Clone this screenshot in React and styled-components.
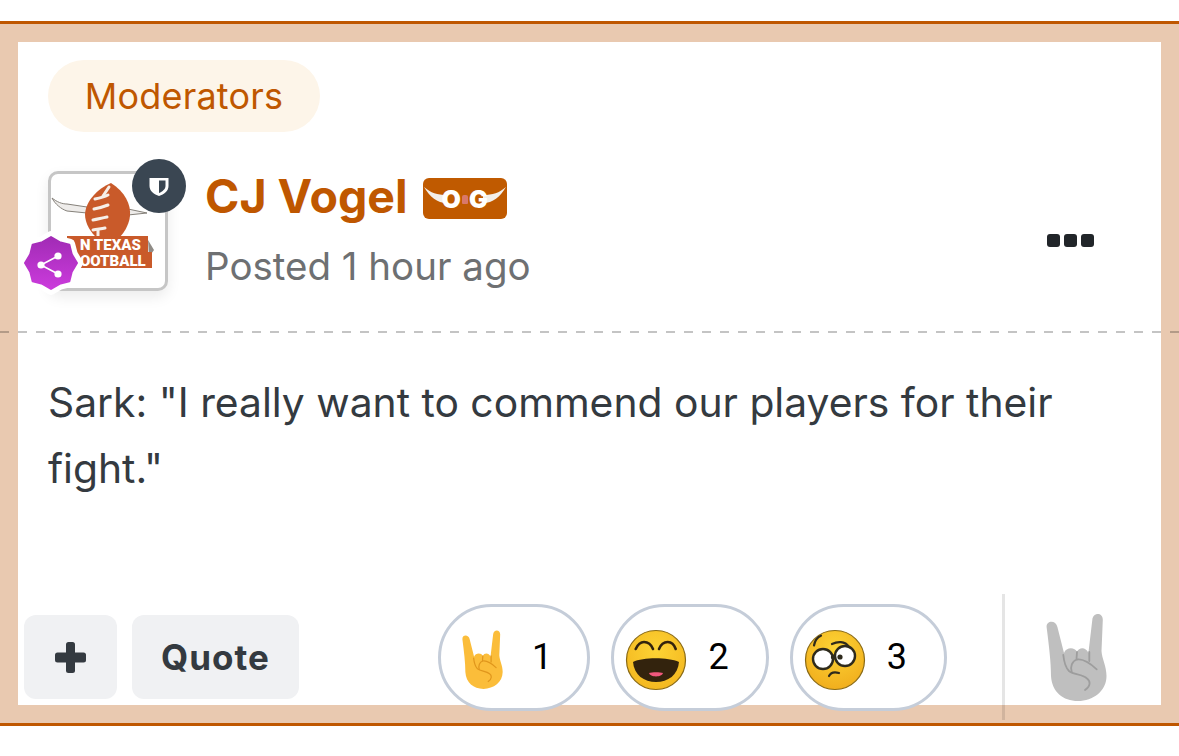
import React from 'react';
import styled, {createGlobalStyle} from 'styled-components';

const burnt = '#bf5700';

//Star badge outline
const starPoints = (outer, inner, cx, cy) => {
    let pts = [];
    for (let i = 0; i < 16; i++) {
        const r = i % 2 === 0 ? outer : inner;
        const a = (Math.PI * i) / 8 - Math.PI / 2;
        pts.push(`${(cx + r * Math.cos(a)).toFixed(2)},${(cy + r * Math.sin(a)).toFixed(2)}`);
    }
    return pts.join(' ');
};

const HandIcon = ({width, height, fill, line}) => (
    <svg width={width} height={height} viewBox="0 0 61 88">
        <path
            fill={fill}
            d="M.6 13C.2 6 10 5.800 11.400 13L18 39C20 33 29 33 31 38C33 33 40 33 42.400 39L46.300 6C46.800 -2 57 -2 56.800 6L55.500 37C56 45 60.500 52 60.500 62C60.500 77 47 87 32 87C17 87 6 78 5 62C5 48 3 32 .6 13Z"
        />
        <g fill="none" stroke={line} strokeWidth="1.800" strokeLinecap="round" strokeLinejoin="round">
            <path d="M17.300 41C18 48 20 54 23 57C28 61 36 60 41 64.500C44.500 67 45 72 39 76" />
            <path d="M25.700 58C24 53 26 47 31 45.500C37 44.500 45 50 50.700 55.300" />
            <path d="M43.300 38V47" />
            <path d="M31 38L30.500 45" />
        </g>
    </svg>
);

const LaughEmoji = () => (
    <svg width="62" height="62" viewBox="0 0 62 62">
        <defs>
            <radialGradient id="laughFace" cx="50%" cy="35%" r="70%">
                <stop offset="0%" stopColor="#fdd334" />
                <stop offset="100%" stopColor="#f3b61f" />
            </radialGradient>
        </defs>
        <circle cx="31" cy="31" r="29.500" fill="url(#laughFace)" stroke="#8a6a14" strokeWidth="1.200" />
        <g fill="none" stroke="#33230d" strokeWidth="2.600" strokeLinecap="round">
            <path d="M10.700 20C13 15 16 13 19 13C22 13 26 15 28 20" />
            <path d="M34 20C36 15 40 13 42.700 13C46 13 49 15 50.700 20" />
        </g>
        <path d="M8 33C18 28 43 28 54 33C53 46 43 53 31 53C19 53 9 46 8 33Z" fill="#33230d" />
        <path d="M24 44C27 43 35 43 38 44C37 48.500 25 48.500 24 44Z" fill="#f0587c" />
    </svg>
);

const ConfusedEmoji = () => (
    <svg width="62" height="62" viewBox="0 0 62 62">
        <defs>
            <radialGradient id="confusedFace" cx="50%" cy="30%" r="75%">
                <stop offset="0%" stopColor="#fdd334" />
                <stop offset="100%" stopColor="#f0ac1c" />
            </radialGradient>
        </defs>
        <circle cx="31" cy="31" r="29.500" fill="url(#confusedFace)" stroke="#8a6a14" strokeWidth="1.200" />
        <circle cx="19" cy="30" r="10" fill="#fff" stroke="#2e2a1c" strokeWidth="2.400" />
        <circle cx="41" cy="27" r="10" fill="#fff" stroke="#2e2a1c" strokeWidth="2.400" />
        <circle cx="29.500" cy="28" r="2.600" fill="#2e2a1c" />
        <circle cx="36" cy="28" r="2.600" fill="#2e2a1c" />
        <g fill="none" stroke="#2e2a1c" strokeWidth="2.200" strokeLinecap="round">
            <path d="M10 16.500C11 11 13.500 8 17 6.700" />
            <path d="M28 15C33 12.500 41 11.500 45 18" />
            <path d="M25 47C26.500 44 30 42.500 35 44" />
        </g>
    </svg>
);

const TeamLogo = () => (
    <svg width="114" height="114" viewBox="0 0 114 114">
        <path d="M1 24C6 28 11 30 16 30L36 33L36 39L16 37C10 35 4 30 1 24Z" fill="#eeecea" stroke="#85817a" strokeWidth="1" />
        <path d="M77 35L96 39L77 41Z" fill="#eeecea" stroke="#85817a" strokeWidth="1" />
        <path d="M60 9C74 18 80 30 79 42C78 52 72 60 67 65H47C40 59 34 50 34 40C35 27 46 15 60 9Z" fill="#c95a2a" />
        <g fill="none" stroke="#f6efe9" strokeWidth="3" strokeLinecap="round">
            <path d="M58 13L52 22" />
            <path d="M44 25C49 24 53 23 57 21" />
            <path d="M43 35C48 34 52 33 57 31" />
            <path d="M42 46C47 45 51 44 56 43" />
            <path d="M42 56C46 55 50 55 54 54" />
            <path d="M47 56V64" />
        </g>
        <path d="M97 66L103 76L98 83Z" fill="#8f8b86" />
        <path d="M16 62H97V78H101V94H16Z" fill="#c95a2a" />
        <text x="29" y="76" fontFamily="'Roboto', sans-serif" fontWeight="900" fontSize="15" fill="#fff">N TEXAS</text>
        <text x="29" y="92" fontFamily="'Roboto', sans-serif" fontWeight="900" fontSize="15" fill="#fff">OOTBALL</text>
    </svg>
);

const App = () => {
    return (
        <>
            <GlobalStyle />
            <Card>
                <Panel>
                    <Tag>Moderators</Tag>
                    <Head>
                        <Avatar>
                            <TeamLogo />
                            <ShieldBadge>
                                <svg width="20" height="19" viewBox="0 0 20 19">
                                    <path d="M.5 1H19.500V9C19.500 14 15 17.500 10 19C5 17.500 .5 14 .5 9Z" fill="#fff" />
                                    <path d="M10 3.500H16.500V9C16.500 12 13.500 14.500 10 16Z" fill="#3a4652" />
                                </svg>
                            </ShieldBadge>
                            <ShareBadge>
                                <svg width="66" height="66" viewBox="0 0 66 66">
                                    <defs>
                                        <linearGradient id="shareFill" x1="0" y1="0" x2="0" y2="1">
                                            <stop offset="0%" stopColor="#a12bb5" />
                                            <stop offset="100%" stopColor="#cb3bdc" />
                                        </linearGradient>
                                    </defs>
                                    <polygon points={starPoints(27, 23.5, 33, 33)} fill="#fff" stroke="#fff" strokeWidth="10" strokeLinejoin="round" />
                                    <polygon points={starPoints(26, 22.5, 33, 33)} fill="url(#shareFill)" stroke="url(#shareFill)" strokeWidth="2" strokeLinejoin="round" />
                                    <g stroke="#fff" strokeWidth="1.500">
                                        <path d="M23 35L40 26M23 35L40 44" />
                                    </g>
                                    <g fill="#fff">
                                        <circle cx="23" cy="35" r="3.600" />
                                        <circle cx="40" cy="26" r="3.600" />
                                        <circle cx="40" cy="44" r="3.600" />
                                    </g>
                                </svg>
                            </ShareBadge>
                        </Avatar>
                        <Author>
                            <NameRow>
                                <Name>CJ Vogel</Name>
                                <OgBadge>
                                    <svg width="84" height="41" viewBox="0 0 84 41">
                                        <path d="M1 9C8 15 14 17 24 17L24 25C14 25 7 19 1 9Z" fill="#f3efe9" />
                                        <path d="M83 9C76 15 70 17 60 17L60 25C70 25 77 19 83 9Z" fill="#f3efe9" />
                                    </svg>
                                    <OgText>OG</OgText>
                                    <OgMark />
                                </OgBadge>
                            </NameRow>
                            <Posted>Posted 1 hour ago</Posted>
                        </Author>
                        <Dots>
                            <Dot />
                            <Dot />
                            <Dot />
                        </Dots>
                    </Head>
                    <DashedRule />
                    <Message>Sark: "I really want to commend our players for their fight."</Message>
                    <Footer>
                        <PlainButton $wide={false}>
                            <svg width="31" height="31" viewBox="0 0 31 31">
                                <rect x="11" y="0" width="9" height="31" rx="2.500" fill="#343a40" />
                                <rect x="0" y="10.500" width="31" height="10" rx="2.500" fill="#343a40" />
                            </svg>
                        </PlainButton>
                        <PlainButton $wide={true}>Quote</PlainButton>
                        <Reactions>
                            <ReactionPill $left={14} $right={35}>
                                <EmojiSlot $w={55}>
                                    <HandIcon width={41} height={60} fill="#fbbd3a" line="#e0961c" />
                                </EmojiSlot>
                                <Count>1</Count>
                            </ReactionPill>
                            <ReactionPill $left={12} $right={37}>
                                <EmojiSlot $w={60}>
                                    <LaughEmoji />
                                </EmojiSlot>
                                <Count>2</Count>
                            </ReactionPill>
                            <ReactionPill $left={12} $right={37}>
                                <EmojiSlot $w={60}>
                                    <ConfusedEmoji />
                                </EmojiSlot>
                                <Count>3</Count>
                            </ReactionPill>
                        </Reactions>
                        <Divider />
                        <ReactButton>
                            <HandIcon width={61} height={88} fill="#bfbfbf" line="#9d9d9d" />
                        </ReactButton>
                    </Footer>
                </Panel>
            </Card>
        </>
    );
};

const GlobalStyle = createGlobalStyle`
    * {
        box-sizing: border-box;
    }
    body {
        margin: 0;
        background: #fff;
        font-family: 'Inter', sans-serif;
    }
`;

const Card = styled.div`
    margin-top: 21px;
    padding: 18px;
    background: #e9c9b0;
    border-top: 3px solid ${burnt};
    border-bottom: 3px solid ${burnt};
`;

const Panel = styled.div`
    height: 663px;
    padding-top: 18px;
    background: #fff;
    display: flex;
    flex-direction: column;
`;

const Tag = styled.div`
    align-self: flex-start;
    width: 272px;
    height: 72px;
    margin-left: 30px;
    border-radius: 36px;
    background: #fdf5e9;
    color: ${burnt};
    font-size: 36px;
    line-height: 72px;
    letter-spacing: 0.2px;
    text-align: center;
`;

const Head = styled.div`
    margin-top: 39px;
    padding: 0 67px 0 30px;
    display: flex;
    align-items: flex-start;
`;

const Avatar = styled.div`
    position: relative;
    flex: none;
    width: 120px;
    height: 120px;
    border: 3px solid #c6c6c6;
    border-radius: 10px;
    background: #fff;
    box-shadow: 0 6px 14px rgba(0, 0, 0, 0.08);
    svg {
        display: block;
    }
`;

const ShieldBadge = styled.div`
    position: absolute;
    top: -15px;
    right: -21px;
    width: 54px;
    height: 54px;
    border-radius: 50%;
    background: #3a4652;
    display: flex;
    align-items: center;
    justify-content: center;
`;

const ShareBadge = styled.div`
    position: absolute;
    left: -33px;
    top: 56px;
    width: 66px;
    height: 66px;
`;

const Author = styled.div`
    margin-left: 37px;
    margin-top: -1px;
    flex: 1;
`;

const NameRow = styled.div`
    display: flex;
    align-items: center;
    height: 52px;
`;

const Name = styled.div`
    color: ${burnt};
    font-size: 46.5px;
    font-weight: 700;
    line-height: 52px;
`;

const OgBadge = styled.div`
    position: relative;
    flex: none;
    width: 84px;
    height: 41px;
    margin-left: 15px;
    margin-top: 5px;
    border-radius: 6px;
    background: #c05a00;
    svg {
        display: block;
    }
`;

const OgText = styled.span`
    position: absolute;
    top: 1px;
    left: 0;
    width: 100%;
    padding-left: 8px;
    color: #fff;
    font-size: 25px;
    font-weight: 900;
    line-height: 41px;
    letter-spacing: 8px;
    text-align: center;
`;

const OgMark = styled.span`
    position: absolute;
    left: 39px;
    top: 17px;
    width: 6px;
    height: 9px;
    border-radius: 2px 2px 1px 1px;
    background: #d9786a;
`;

const Posted = styled.div`
    margin-top: 22px;
    color: #6e7072;
    font-size: 38.5px;
    line-height: 44px;
`;

const Dots = styled.div`
    margin-top: 63px;
    display: flex;
    gap: 4px;
`;

const Dot = styled.span`
    width: 13px;
    height: 13px;
    border-radius: 3px;
    background: #212529;
`;

const DashedRule = styled.div`
    flex: none;
    height: 2px;
    margin: 40px -18px 0;
    background: repeating-linear-gradient(to right, rgba(0, 0, 0, 0.23) 0 9px, transparent 9px 18px);
`;

const Message = styled.div`
    margin-top: 36px;
    padding: 0 100px 0 30px;
    color: #343a40;
    font-size: 40.8px;
    line-height: 66px;
`;

const Footer = styled.div`
    height: 126px;
    margin-top: auto;
    margin-bottom: -15px;
    padding-left: 6px;
    display: flex;
    align-items: center;
`;

const PlainButton = styled.div`
    width: ${(props) => (props.$wide ? '167px' : '93px')};
    height: 84px;
    margin-left: ${(props) => (props.$wide ? '15px' : '0')};
    border-radius: 12px;
    background: #f0f1f3;
    color: #343a40;
    font-size: 35px;
    font-weight: 700;
    letter-spacing: 1px;
    display: flex;
    align-items: center;
    justify-content: center;
`;

const Reactions = styled.div`
    margin-left: 139px;
    display: flex;
    gap: 21.2px;
`;

const ReactionPill = styled.div`
    height: 107px;
    padding: 0 ${(props) => props.$right}px 0 ${(props) => props.$left}px;
    border: 3px solid #c5cdd9;
    border-radius: 54px;
    background: #fff;
    display: flex;
    align-items: center;
    gap: 22px;
`;

const EmojiSlot = styled.div`
    width: ${(props) => props.$w}px;
    margin-top: 6px;
    display: flex;
    justify-content: center;
    svg {
        display: block;
        flex: none;
    }
`;

const Count = styled.span`
    color: #000;
    font-family: 'Roboto', sans-serif;
    font-size: 36px;
`;

const Divider = styled.div`
    flex: none;
    width: 3px;
    height: 126px;
    margin-left: 54.6px;
    background: rgba(0, 0, 0, 0.1);
`;

const ReactButton = styled.div`
    margin-left: 41px;
    margin-top: 2px;
    svg {
        display: block;
    }
`;

export default App;
